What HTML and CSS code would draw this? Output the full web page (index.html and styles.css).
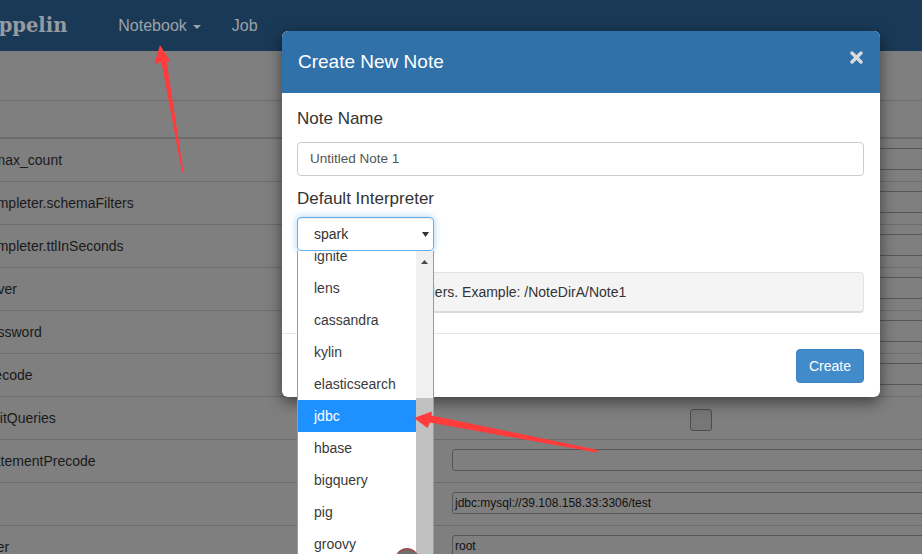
FILE: index.html
```html
<!DOCTYPE html>
<html lang="en">
<head>
<meta charset="utf-8">
<title>Zeppelin - Interpreter</title>
<link rel="stylesheet" href="styles.css">
</head>
<body>
  <nav class="navbar">
    <div class="brand">Zeppelin</div>
    <ul class="nav">
      <li class="nav-item">Notebook<span class="caret"></span></li>
      <li class="nav-item">Job</li>
    </ul>
  </nav>

  <main class="content">
    <div class="spacer"></div>
    <div class="prop-table">
      <div class="prop-head"></div>
      <div class="prop-row"><div class="prop-name">common.max_count</div><div class="prop-value"><input class="prop-input" value="1000"></div></div>
      <div class="prop-row"><div class="prop-name">default.completer.schemaFilters</div><div class="prop-value"><input class="prop-input" value=""></div></div>
      <div class="prop-row"><div class="prop-name">default.completer.ttlInSeconds</div><div class="prop-value"><input class="prop-input" value="120"></div></div>
      <div class="prop-row"><div class="prop-name">default.driver</div><div class="prop-value"><input class="prop-input" value="com.mysql.jdbc.Driver"></div></div>
      <div class="prop-row"><div class="prop-name">default.password</div><div class="prop-value"><input class="prop-input" type="password" value="123456"></div></div>
      <div class="prop-row"><div class="prop-name">default.precode</div><div class="prop-value"><input class="prop-input" value=""></div></div>
      <div class="prop-row"><div class="prop-name">default.splitQueries</div><div class="prop-value"><div class="checkbox"></div></div></div>
      <div class="prop-row"><div class="prop-name">default.statementPrecode</div><div class="prop-value"><input class="prop-input" value=""></div></div>
      <div class="prop-row"><div class="prop-name">default.url</div><div class="prop-value"><input class="prop-input" value="jdbc:mysql://39.108.158.33:3306/test"></div></div>
      <div class="prop-row"><div class="prop-name">default.user</div><div class="prop-value"><input class="prop-input" value="root"></div></div>
    </div>
  </main>

  <div class="modal">
    <div class="modal-header">
      <h4 class="modal-title">Create New Note</h4>
      <svg class="close" width="13" height="13" viewBox="0 0 13 13"><path d="M2 2 L11 11 M11 2 L2 11" stroke="#d9dbde" stroke-width="3.4" stroke-linecap="round"/></svg>
    </div>
    <div class="modal-body">
      <label class="label">Note Name</label>
      <div class="form-control">Untitled Note 1</div>
      <label class="label label-second">Default Interpreter</label>
      <div class="select">
        <span>spark</span>
        <svg width="7" height="5" viewBox="0 0 7 5"><path d="M0 0 H7 L3.5 5 Z" fill="#333"/></svg>
      </div>
      <div class="well">Use '/' to create folders. Example: /NoteDirA/Note1</div>
    </div>
    <div class="modal-footer">
      <button class="btn-primary">Create</button>
    </div>
  </div>

  <div class="dropdown">
    <ul class="dd-list">
      <li class="dd-item">ignite</li>
      <li class="dd-item">lens</li>
      <li class="dd-item">cassandra</li>
      <li class="dd-item">kylin</li>
      <li class="dd-item">elasticsearch</li>
      <li class="dd-item active">jdbc</li>
      <li class="dd-item">hbase</li>
      <li class="dd-item">bigquery</li>
      <li class="dd-item">pig</li>
      <li class="dd-item">groovy</li>
    </ul>
    <div class="dd-scroll">
      <div class="dd-arrow"><svg width="7" height="4" viewBox="0 0 7 4"><path d="M3.5 0 L7 4 H0 Z" fill="#4a4a4a"/></svg></div>
      <div class="dd-track"></div>
      <div class="dd-thumb"></div>
    </div>
  </div>

  <div class="cursor-dot"></div>

  <svg class="annotations" width="922" height="554" viewBox="0 0 922 554">
    <polygon points="160,45 170.5,61.5 166.5,61 183.5,172 182,172.5 161.5,62.5 154.5,63.5" fill="#ff3b3b"/>
    <polygon points="414,418 432,411.5 431.5,415.5 598,450 596.5,452.5 430,422.5 427.5,428" fill="#ff3b3b"/>
  </svg>
</body>
</html>
```

FILE: styles.css
```css
* { box-sizing: border-box; }

body {
  margin: 0;
  width: 922px;
  height: 554px;
  overflow: hidden;
  position: relative;
  background: #7f7f7f;
  font-family: "Liberation Sans", Arial, sans-serif;
}

/* navbar */
.navbar {
  height: 51px;
  background: #1a3956;
  display: flex;
  align-items: center;
}
.brand {
  font-family: "DejaVu Serif", serif;
  font-weight: bold;
  font-size: 19.5px;
  line-height: 51px;
  color: #959ba2;
  margin-left: -28px;
  white-space: nowrap;
}
.nav {
  display: flex;
  gap: 31px;
  list-style: none;
  margin: 0 0 0 51px;
  padding: 0;
}
.nav-item {
  font-size: 16px;
  line-height: 51px;
  color: #9ca2a9;
}
.caret {
  display: inline-block;
  width: 0;
  height: 0;
  margin-left: 6px;
  vertical-align: middle;
  border-top: 4px solid #9ca2a9;
  border-left: 4px solid transparent;
  border-right: 4px solid transparent;
}

/* background table */
.spacer { height: 49px; }
.prop-table {
  margin-left: -72px;
  width: 1400px;
}
.prop-head {
  height: 39px;
  border-top: 1px solid #6c6c6c;
  border-bottom: 2px solid #6c6c6c;
}
.prop-row {
  display: flex;
  height: 43px;
  padding-top: 9px;
  border-bottom: 1px solid #6c6c6c;
}
.prop-name {
  flex: 0 0 516px;
  padding-left: 8px;
  font-size: 14px;
  line-height: 24px;
  color: #1a1a1a;
  white-space: nowrap;
}
.prop-value {
  flex: 1;
  padding-left: 8px;
}
.prop-input {
  display: block;
  width: 600px;
  height: 22px;
  margin: 0;
  padding: 0 2px;
  border: 1px solid #575757;
  border-radius: 3px;
  background: #7f7f7f;
  font-family: "Liberation Sans", Arial, sans-serif;
  font-size: 12px;
  color: #111;
}
.checkbox {
  width: 22px;
  height: 22px;
  margin: 3px 0 0 238px;
  border: 1px solid #4d4d4d;
  border-radius: 3px;
  background: #777;
}

/* modal */
.modal {
  position: absolute;
  left: 282px;
  top: 31px;
  width: 598px;
  background: #fff;
  border-radius: 6px;
  overflow: hidden;
  box-shadow: 0 5px 15px rgba(0, 0, 0, 0.5);
}
.modal-header {
  height: 62px;
  background: #3071a9;
  display: flex;
  align-items: center;
  justify-content: space-between;
  padding: 0 17px 0 16px;
}
.modal-title {
  margin: 0;
  font-size: 19px;
  font-weight: normal;
  color: #fff;
}
.close {
  align-self: flex-start;
  margin-top: 20px;
}
.modal-body {
  padding: 14px 16px 20px 15px;
}
.label {
  display: block;
  font-size: 17px;
  line-height: 24px;
  color: #333;
  margin-bottom: 11px;
}
.label-second {
  margin-top: 11px;
  margin-bottom: 6px;
}
.form-control {
  height: 34px;
  padding: 0 12px;
  border: 1px solid #ccc;
  border-radius: 4px;
  font-size: 13.5px;
  line-height: 32px;
  color: #555;
}
.select {
  width: 137px;
  height: 34px;
  display: flex;
  align-items: center;
  justify-content: space-between;
  padding: 0 4px 0 16px;
  border: 1px solid #66afe9;
  border-radius: 4px;
  box-shadow: inset 0 1px 1px rgba(0, 0, 0, 0.075), 0 0 7px rgba(102, 175, 233, 0.6);
  font-size: 14px;
  color: #333;
}
.well {
  margin-top: 21px;
  padding: 9px 9px 9px 14px;
  background: #f4f4f4;
  border: 1px solid #e3e3e3;
  border-bottom: 2px solid #dadada;
  border-radius: 4px;
  font-size: 14px;
  line-height: 20px;
  color: #333;
  white-space: nowrap;
}
.modal-footer {
  display: flex;
  justify-content: flex-end;
  padding: 15px 16px 14px;
  border-top: 1px solid #e5e5e5;
}
.btn-primary {
  height: 34px;
  padding: 0 12px;
  border: 1px solid #3b84c3;
  border-radius: 4px;
  background: #428bca;
  color: #fff;
  font-family: "Liberation Sans", Arial, sans-serif;
  font-size: 14px;
}

/* native select popup */
.dropdown {
  position: absolute;
  left: 297px;
  top: 251px;
  width: 137px;
  height: 310px;
  display: flex;
  overflow: hidden;
  background: #fff;
  border-left: 1px solid #7b9fd8;
  border-right: 1px solid #7b9fd8;
}
.dd-list {
  width: 118px;
  margin: -11px 0 0;
  padding: 0;
  list-style: none;
}
.dd-item {
  height: 32px;
  line-height: 32px;
  padding-left: 16px;
  font-size: 14px;
  color: #3a3a3a;
}
.dd-item.active {
  background: #1e90ff;
  color: #fff;
}
.dd-scroll {
  width: 17px;
  display: flex;
  flex-direction: column;
  background: #f0f0f0;
}
.dd-arrow {
  height: 17px;
  display: flex;
  align-items: flex-end;
  justify-content: center;
  padding-bottom: 4px;
}
.dd-track { height: 130px; }
.dd-thumb {
  flex: 1;
  background: #c1c1c1;
}

.cursor-dot {
  position: absolute;
  left: 395px;
  top: 548px;
  width: 24px;
  height: 24px;
  border-radius: 50%;
  background: #6f6f6f;
  border-top: 2px solid #9b4b4b;
}

.annotations {
  position: absolute;
  left: 0;
  top: 0;
  pointer-events: none;
}
```
